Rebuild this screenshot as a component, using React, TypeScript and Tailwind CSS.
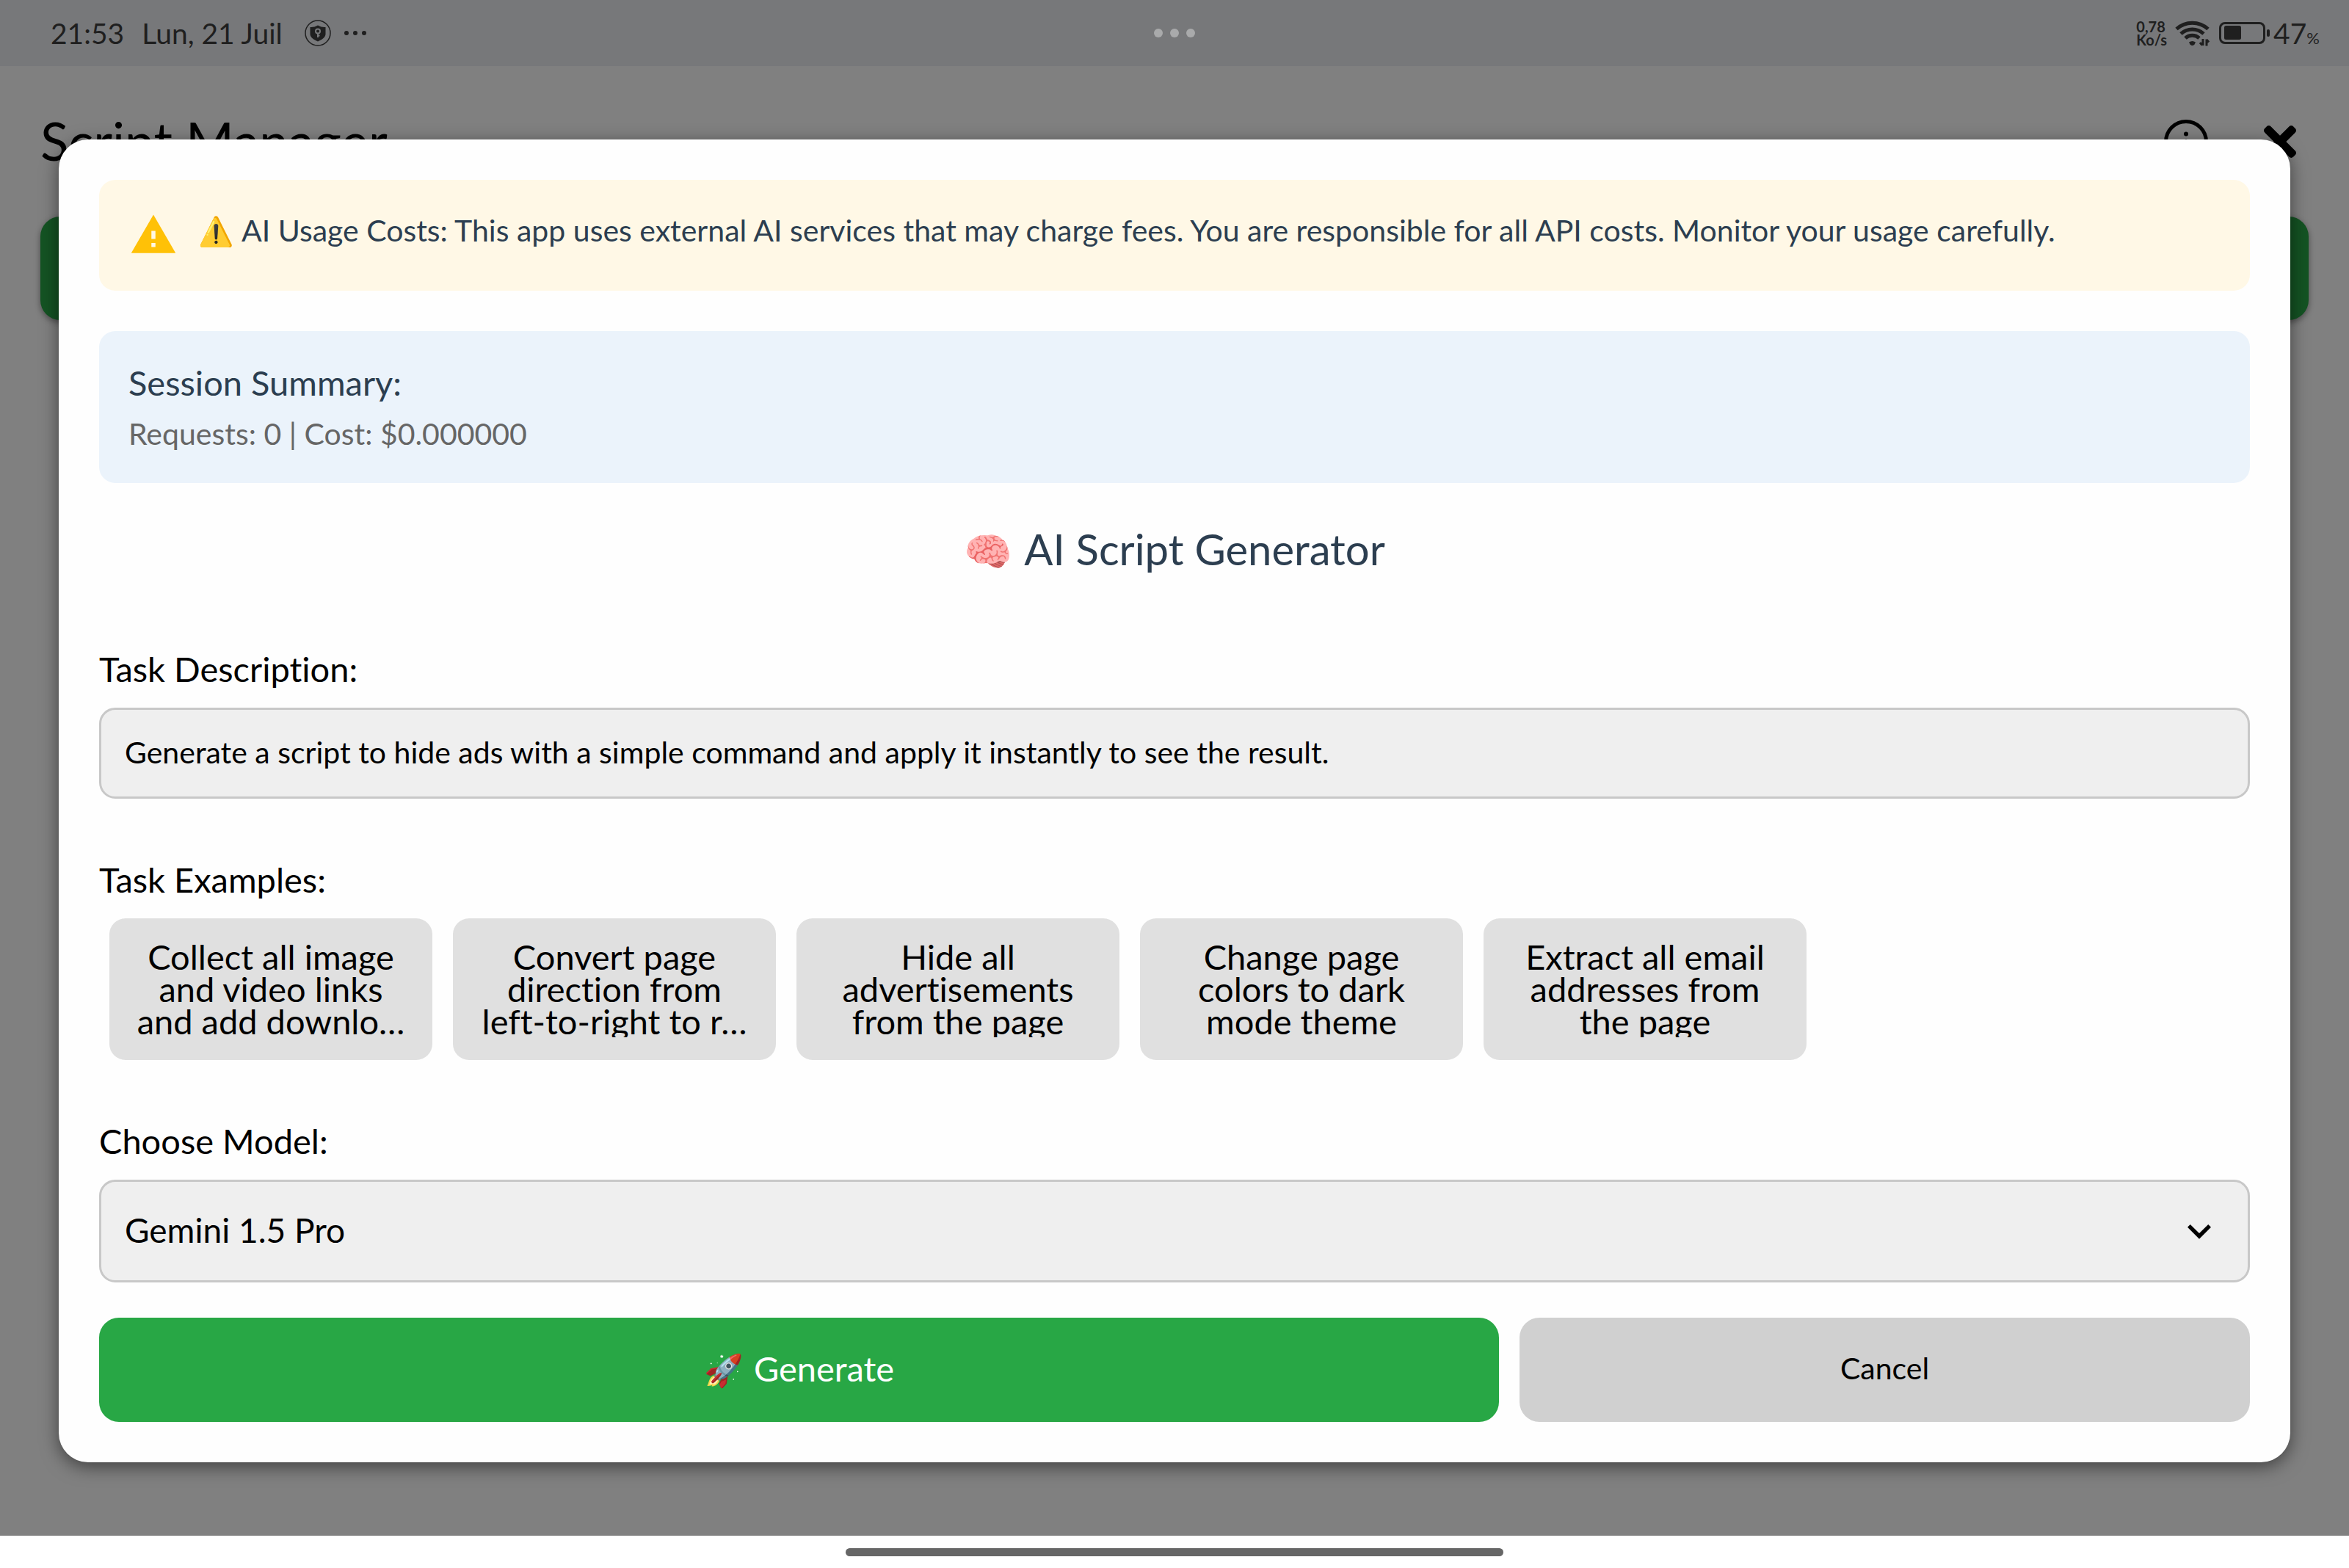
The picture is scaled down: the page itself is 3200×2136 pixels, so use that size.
import type { ReactNode } from "react";
import { FaTimes } from "react-icons/fa";
import { MdKeyboardArrowDown, MdWarning } from "react-icons/md";

const examples = [
  "Collect all image\nand video links\nand add downlo…",
  "Convert page\ndirection from\nleft-to-right to r…",
  "Hide all\nadvertisements\nfrom the page",
  "Change page\ncolors to dark\nmode theme",
  "Extract all email\naddresses from\nthe page",
];

function ShieldBadge() {
  return (
    <svg viewBox="0 0 36 36" className="size-9" aria-hidden="true">
      <circle cx="18" cy="18" r="17" fill="none" stroke="currentColor" strokeWidth="1.5" />
      <path d="M18 7.5Q23 10.500 28.500 10v9.500c0 4.500-5 7.500-10.500 10-5.500-2.500-10.500-5.500-10.500-10V10Q13 10.500 18 7.500Z" fill="currentColor" />
      <circle cx="18" cy="15.500" r="3" fill="none" stroke="#77787a" strokeWidth="2" />
      <path d="M18 18.500v5.500M18 21.500h2.500" fill="none" stroke="#77787a" strokeWidth="2" />
    </svg>
  );
}

function WifiIcon() {
  return (
    <svg viewBox="0 0 48 36" className="h-9 w-12" aria-hidden="true">
      <g fill="none" stroke="currentColor" strokeWidth="5">
        <path d="M2 12.500a32 32 0 0 1 43 0" />
        <path d="M8 19a23 23 0 0 1 31 0" />
        <path d="M14 25a14 14 0 0 1 19 0" />
      </g>
      <path d="M19 30.500q4.500-3 9 0l-1.500 3q-3 3-6 0Z" fill="currentColor" />
      <path d="M38 26v9M34 31l3 3.500M43 35.500v-9M43 27l3 3.500" fill="none" stroke="currentColor" strokeWidth="3" />
    </svg>
  );
}

function BatteryIcon() {
  return (
    <svg viewBox="0 0 70 30" className="h-[30px] w-[70px]" aria-hidden="true">
      <rect x="1.500" y="1.500" width="60" height="27" rx="6.500" fill="none" stroke="currentColor" strokeWidth="3" />
      <rect x="7" y="5" width="23" height="19" rx="2.500" fill="currentColor" />
      <rect x="65" y="10" width="4" height="10" rx="2" fill="currentColor" />
    </svg>
  );
}

function InfoIcon() {
  return (
    <svg viewBox="0 0 60 60" className="size-[60px]" aria-hidden="true">
      <circle cx="30" cy="30" r="27.500" fill="none" stroke="currentColor" strokeWidth="5" />
      <circle cx="30" cy="19.500" r="3" fill="currentColor" />
      <path d="M30 29v15" stroke="currentColor" strokeWidth="5" strokeLinecap="round" />
    </svg>
  );
}

function StatusBar() {
  return (
    <header className="grid h-[90px] grid-cols-3 items-center bg-[#77787a] px-10 text-[39px] text-[#1f1f1f]">
      <div className="flex items-center pl-[29px]">
        <time>21:53</time>
        <span className="ml-6">Lun, 21 Juil</span>
        <div className="ml-[30px] flex items-center gap-[18px]">
          <ShieldBadge />
          <div className="flex gap-1.5">
            <span className="size-1.5 rounded-full bg-current" />
            <span className="size-1.5 rounded-full bg-current" />
            <span className="size-1.5 rounded-full bg-current" />
          </div>
        </div>
      </div>
      <div className="flex justify-center gap-2.5">
        <span className="size-3 rounded-full bg-[#a9aaab]" />
        <span className="size-3 rounded-full bg-[#a9aaab]" />
        <span className="size-3 rounded-full bg-[#a9aaab]" />
      </div>
      <div className="flex items-center justify-end">
        <div className="mr-[11px] text-[20px] leading-[18px] font-bold">
          <p>0,78</p>
          <p>Ko/s</p>
        </div>
        <WifiIcon />
        <div className="ml-3 flex items-center gap-1">
          <BatteryIcon />
          <p>
            47<span className="text-[22px]">%</span>
          </p>
        </div>
      </div>
    </header>
  );
}

function Field({ id, label, children }: { id: string; label: string; children: ReactNode }) {
  return (
    <div>
      <label htmlFor={id} className="mb-[23px] block text-[47px] leading-[60px]">
        {label}
      </label>
      {children}
    </div>
  );
}

export default function App() {
  return (
    <div className="flex min-h-screen flex-col bg-white font-[Lato,sans-serif] text-black [font-variant-ligatures:none]">
      <StatusBar />

      <div className="relative flex-1 bg-[#808080]">
        <div className="absolute inset-x-0 top-0 px-[55px]">
          <div className="flex h-[205px] items-center justify-between pr-[17px]">
            <h1 className="text-[71px]">Script Manager</h1>
            <div className="flex items-center gap-[76px]">
              <button type="button" aria-label="Information">
                <InfoIcon />
              </button>
              <button type="button" aria-label="Close">
                <FaTimes className="h-16 w-11" />
              </button>
            </div>
          </div>
          <button
            type="button"
            aria-label="New script"
            className="block h-[141px] w-full rounded-[27px] bg-[#145323] shadow-[0_3px_8px_rgba(0,0,0,0.4)]"
          />
        </div>

        <div className="relative flex h-full items-center px-20 py-[100px]">
          <section
            role="dialog"
            aria-labelledby="dialog-title"
            className="w-full rounded-[40px] bg-[#fefefe] p-[55px] shadow-[0_6px_24px_rgba(0,0,0,0.5)]"
          >
            <div className="flex min-h-[151px] items-start gap-7 rounded-[22px] bg-[#fff8e6] px-[41px] py-[42px] text-[#2c3e50]">
              <MdWarning className="size-[66px] shrink-0 text-[#ffc107]" />
              <p className="flex items-baseline gap-2.5 text-[41px] leading-[54px]">
                <span className="text-[39px] leading-none">⚠️</span>
                <span>
                  AI Usage Costs: This app uses external AI services that may charge fees. You are responsible for all
                  API costs. Monitor your usage carefully.
                </span>
              </p>
            </div>

            <div className="mt-[55px] rounded-[22px] bg-[#ebf3fb] p-10">
              <h3 className="mb-[13px] text-[47px] leading-[60px] text-[#2c3e50]">Session Summary:</h3>
              <p className="text-[41px] leading-[54px] text-[#666666]">Requests: 0 | Cost: $0.000000</p>
            </div>

            <h2
              id="dialog-title"
              className="mt-[52px] flex items-baseline justify-center gap-4 text-[58px] leading-[76px] text-[#2c3e50]"
            >
              <span className="text-[53px] leading-none">🧠</span>
              <span>AI Script Generator</span>
            </h2>

            <div className="mt-[95px] flex flex-col gap-20">
              <Field id="task" label="Task Description:">
                <input
                  id="task"
                  type="text"
                  defaultValue="Generate a script to hide ads with a simple command and apply it instantly to see the result."
                  className="block h-[124px] w-full rounded-[22px] border-3 border-[#c8c8c8] bg-[#efefef] px-8 pb-1 text-[41px]"
                />
              </Field>

              <div>
                <h3 className="mb-[23px] text-[47px] leading-[60px]">Task Examples:</h3>
                <div className="flex flex-wrap gap-7 px-3.5">
                  {examples.map((example) => (
                    <button
                      key={example}
                      type="button"
                      className="w-[440px] rounded-[22px] bg-[#e0e0e0] pt-[30px] pb-[31px] text-center text-[47px] leading-[44px]"
                    >
                      <span className="block overflow-hidden whitespace-pre">{example}</span>
                    </button>
                  ))}
                </div>
              </div>

              <Field id="model" label="Choose Model:">
                <div className="relative">
                  <select
                    id="model"
                    defaultValue="pro"
                    className="block h-[140px] w-full appearance-none rounded-[22px] border-3 border-[#c8c8c8] bg-[#efefef] px-8 pb-1 text-[46px]"
                  >
                    <option value="pro">Gemini 1.5 Pro</option>
                  </select>
                  <MdKeyboardArrowDown className="pointer-events-none absolute inset-y-0 right-[37px] my-auto size-16" />
                </div>
              </Field>
            </div>

            <div className="mt-12 flex h-[142px] gap-7">
              <button
                type="button"
                className="flex flex-[23] items-center justify-center rounded-[27px] bg-[#28a745] pb-1 text-[47px] text-white"
              >
                <span className="flex items-baseline gap-3.5">
                  <span className="text-[43px] leading-none">🚀</span>
                  <span>Generate</span>
                </span>
              </button>
              <button type="button" className="flex-[12] rounded-[27px] bg-[#d0d0d0] pb-1 text-[41px]">
                Cancel
              </button>
            </div>
          </section>
        </div>
      </div>

      <footer className="flex h-11 justify-center bg-white pt-[17px]">
        <div className="h-[11px] w-[28%] rounded-full bg-[#666666]" />
      </footer>
    </div>
  );
}
